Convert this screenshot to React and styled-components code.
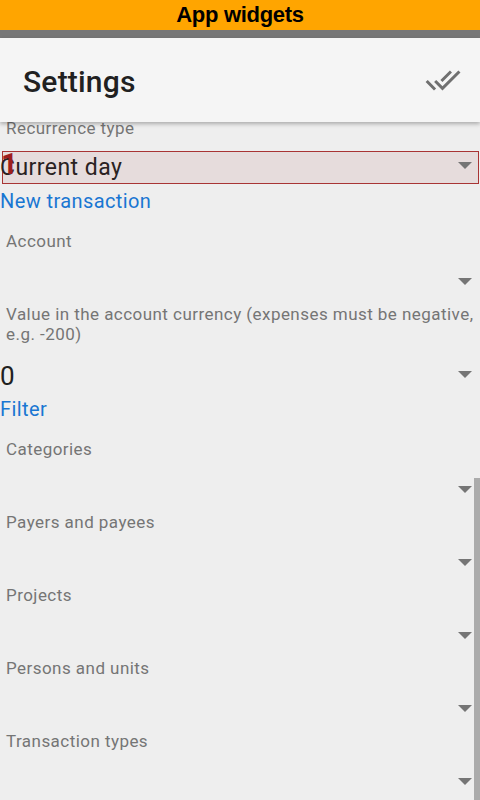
import React from 'react';
import styled, { createGlobalStyle } from 'styled-components';

const GlobalStyle = createGlobalStyle`
  html, body {
    margin: 0;
    padding: 0;
    overflow: hidden;
    background-color: #eeeeee;
  }
  * {
    box-sizing: border-box;
  }
`;

export const Screen = styled.div`
  position: relative;
  width: 480px;
  height: 800px;
  overflow: hidden;
  background-color: #eeeeee;
  font-family: Roboto, 'Noto Sans', sans-serif;
`;

export const Banner = styled.div`
  height: 30px;
  line-height: 30px;
  background-color: #ffa500;
  color: #000;
  text-align: center;
  font-family: 'Liberation Sans', Arial, sans-serif;
  font-weight: 700;
  font-size: 22px;
  letter-spacing: -0.3px;
`;

export const StatusStrip = styled.div`
  height: 8px;
  background-color: #777777;
`;

export const AppBar = styled.div`
  position: relative;
  z-index: 2;
  height: 84px;
  display: flex;
  align-items: center;
  justify-content: space-between;
  padding: 0 19px 0 23px;
  background-color: #f5f5f5;
  box-shadow: 0 2px 4px rgba(0, 0, 0, 0.28);
`;

export const Title = styled.h1`
  margin: 0;
  padding-top: 3px;
  font-size: 30px;
  line-height: 36px;
  font-weight: 500;
  letter-spacing: 0.2px;
  color: #212121;
`;

export const IconButton = styled.div`
  width: 36px;
  height: 36px;
  display: flex;
  color: #707070;
`;

export const Content = styled.div`
  margin-top: -3.8px;
  display: flex;
  flex-direction: column;
`;

export const Label = styled.div`
  padding: 0 0 0 6px;
  font-size: 17px;
  line-height: 20px;
  letter-spacing: 0.45px;
  color: #757575;
`;

export const SectionTitle = styled.div`
  padding-bottom: 18px;
  font-size: 20px;
  line-height: 24px;
  letter-spacing: 0.4px;
  color: #1976d2;
`;

export const Spinner = styled.div`
  height: 53px;
  display: flex;
  align-items: flex-start;
  justify-content: space-between;
`;

export const SpinnerValue = styled.span`
  padding-top: 17px;
  font-size: 26px;
  line-height: 30px;
  color: #212121;
`;

export const Arrow = styled.span`
  width: 0;
  height: 0;
  margin: ${(p) => p.$top}px ${(p) => p.$right}px 0 auto;
  border-left: 7px solid transparent;
  border-right: 7px solid transparent;
  border-top: 7px solid #757575;
  flex-shrink: 0;
`;

export const SelectedSpinner = styled.div`
  padding: 13px 1px 5px 2px;
`;

export const SelectedBox = styled.div`
  position: relative;
  height: 33px;
  display: flex;
  align-items: flex-start;
  border: 1px solid #a83434;
  background-color: #e6dcdc;
`;

export const SelectedText = styled.span`
  margin-left: -3px;
  font-size: 23px;
  line-height: 31px;
  letter-spacing: 0.45px;
  color: #2a2222;
`;

export const ErrorMark = styled.span`
  position: absolute;
  left: -2px;
  top: -2.4px;
  font-size: 29px;
  line-height: 29px;
  font-weight: 700;
  color: #9e1e1e;
`;

export const ScrollIndicator = styled.div`
  position: absolute;
  right: 0;
  top: 478px;
  bottom: 0;
  width: 6px;
  background-color: #ababab;
`;

const DoneAllIcon = () => (
  <svg width="36" height="36" viewBox="0 0 24 24" fill="currentColor">
    <path d="M18 7l-1.41-1.41-6.34 6.34 1.41 1.41L18 7zm4.24-1.41L11.66 16.17 7.48 12l-1.41 1.41L11.66 19l12-12-1.42-1.41zM.41 13.41L6 19l1.41-1.41L1.83 12 .41 13.41z" />
  </svg>
);

const Field = ({ label, value }) => (
  <>
    <Label>{label}</Label>
    <Spinner>
      {value !== undefined && <SpinnerValue>{value}</SpinnerValue>}
      <Arrow $top={27} $right={8} />
    </Spinner>
  </>
);

const filterFields = [
  'Categories',
  'Payers and payees',
  'Projects',
  'Persons and units',
  'Transaction types',
];

const App = () => {
  return (
    <Screen>
      <GlobalStyle />
      <Banner>App widgets</Banner>
      <StatusStrip />
      <AppBar>
        <Title>Settings</Title>
        <IconButton>
          <DoneAllIcon />
        </IconButton>
      </AppBar>
      <Content>
        <Label>Recurrence type</Label>
        <SelectedSpinner>
          <SelectedBox>
            <ErrorMark>1</ErrorMark>
            <SelectedText>Current day</SelectedText>
            <Arrow $top={10} $right={6} />
          </SelectedBox>
        </SelectedSpinner>

        <SectionTitle>New transaction</SectionTitle>
        <Field label="Account" />
        <Field
          label={
            <>
              Value in the account currency (expenses must be negative,
              <br />
              e.g. -200)
            </>
          }
          value="0"
        />

        <SectionTitle>Filter</SectionTitle>
        {filterFields.map((name) => (
          <Field key={name} label={name} />
        ))}
      </Content>
      <ScrollIndicator />
    </Screen>
  );
};

export default App;
